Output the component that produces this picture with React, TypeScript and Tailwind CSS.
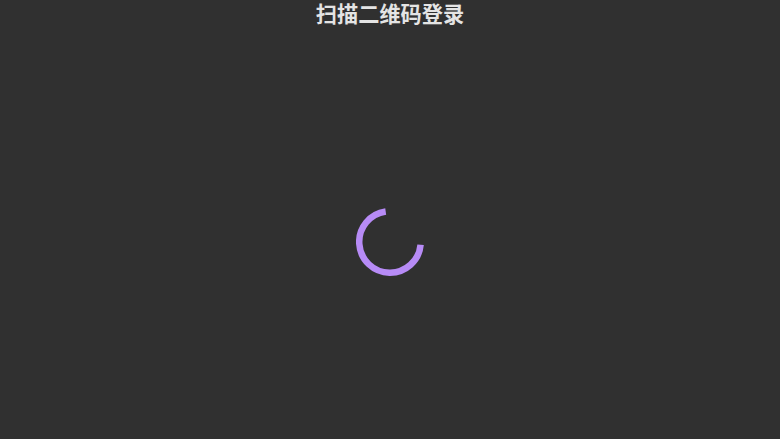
export default function App() {
  return (
    <div className="w-[780px] h-[439px] bg-[#303030] flex flex-col items-center overflow-hidden">
      <h1 className="text-[21.2px] leading-[26px] font-bold text-[#e4e4e4]" style={{ fontFamily: '"Noto Sans CJK SC", sans-serif' }}>扫描二维码登录</h1>
      <div className="flex-1 flex items-center justify-center pt-[19px]">
        <svg width="68" height="68" viewBox="0 0 68 68" fill="none" className="block">
          <path d="M29.7 3.5 A30.75 30.75 0 1 0 64.6 36.7" stroke="#b78bf6" strokeWidth="6.5" />
        </svg>
      </div>
    </div>
  );
}
